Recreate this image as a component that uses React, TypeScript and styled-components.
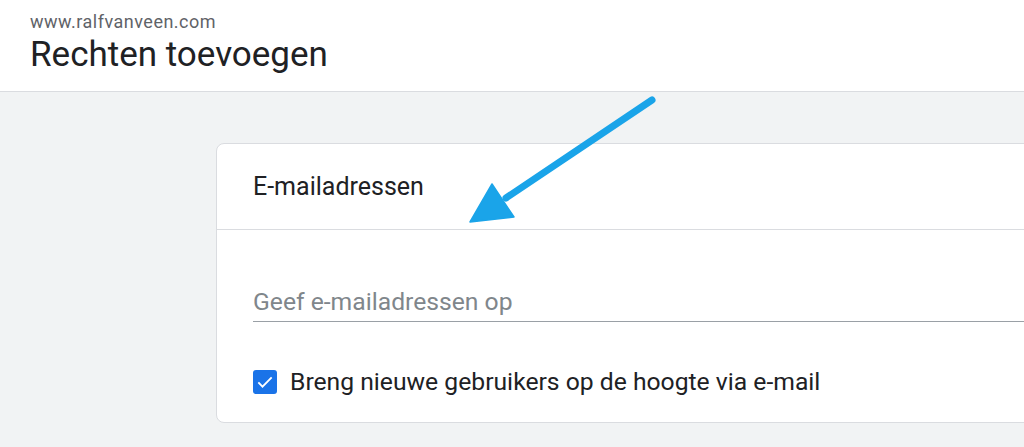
import styled, { createGlobalStyle } from 'styled-components';

const GlobalStyle = createGlobalStyle`
	html, body {
		margin: 0;
		padding: 0;
		background: #f1f3f4;
		font-family: Roboto, 'Noto Sans', Arial, sans-serif;
		overflow: hidden;
	}
`;

const App = () => {
	return (
		<>
			<GlobalStyle />
			<SPage>
				<Header>
					<SiteName>www.ralfvanveen.com</SiteName>
					<Title>Rechten toevoegen</Title>
				</Header>
				<Main>
					<Card>
						<CardHeader>E-mailadressen</CardHeader>
						<CardBody>
							<EmailInput placeholder='Geef e-mailadressen op' type='text' />
							<CheckRow>
								<CheckBox>
									<svg width='20' height='20' viewBox='0 0 24 24'>
										<path d='M4 12.5l5 5L20 6.5' fill='none' stroke='#fff' strokeWidth='2.2' />
									</svg>
								</CheckBox>
								<CheckLabel>Breng nieuwe gebruikers op de hoogte via e-mail</CheckLabel>
							</CheckRow>
						</CardBody>
					</Card>
				</Main>
				<Arrow width='200' height='140' viewBox='0 0 200 140'>
					<line x1='184' y1='8' x2='38' y2='106' stroke='#1aa4e9' strokeWidth='7' strokeLinecap='round' />
					<polygon points='2,130 24,92 46,125' fill='#1aa4e9' stroke='#1aa4e9' strokeWidth='1.5' strokeLinejoin='round' />
				</Arrow>
			</SPage>
		</>
	);
};

export default App;

const SPage = styled.div`
	position: relative;
	height: 447px;
	width: 1024px;
	overflow: hidden;
`;

const Header = styled.div`
	height: 92px;
	background: #fff;
	border-bottom: 1px solid #dadce0;
	padding: 12px 0 0 30px;
	box-sizing: border-box;
`;

const SiteName = styled.div`
	font-size: 18px;
	line-height: 20px;
	color: #5f6368;
	letter-spacing: 0.5px;
`;

const Title = styled.div`
	margin-top: 3px;
	font-size: 35px;
	line-height: 40px;
	color: #202124;
`;

const Main = styled.div`
	padding: 51px 0 0 216px;
`;

const Card = styled.div`
	width: 900px;
	height: 280px;
	box-sizing: border-box;
	background: #fff;
	border: 1px solid #dadce0;
	border-radius: 8px;
`;

const CardHeader = styled.div`
	height: 85px;
	display: flex;
	align-items: center;
	padding-left: 36px;
	border-bottom: 1px solid #dadce0;
	font-size: 25px;
	color: #202124;
`;

const CardBody = styled.div`
	padding: 46px 36px 0;
	display: flex;
	flex-direction: column;
`;

const EmailInput = styled.input`
	width: 100%;
	height: 46px;
	box-sizing: border-box;
	border: none;
	border-bottom: 1px solid #9aa0a6;
	outline: none;
	padding: 6px 0 0;
	font-family: inherit;
	font-size: 24.7px;
	color: #202124;
	background: transparent;

	&::placeholder {
		color: #80868b;
	}
`;

const CheckRow = styled.div`
	margin-top: 45px;
	display: flex;
	align-items: center;
	gap: 13px;
`;

const CheckBox = styled.div`
	width: 24px;
	height: 24px;
	flex-shrink: 0;
	border-radius: 3px;
	background: #1a73e8;
	display: flex;
	align-items: center;
	justify-content: center;
`;

const CheckLabel = styled.div`
	font-size: 24.7px;
	color: #202124;
`;

const Arrow = styled.svg`
	position: absolute;
	left: 468px;
	top: 92px;
`;
